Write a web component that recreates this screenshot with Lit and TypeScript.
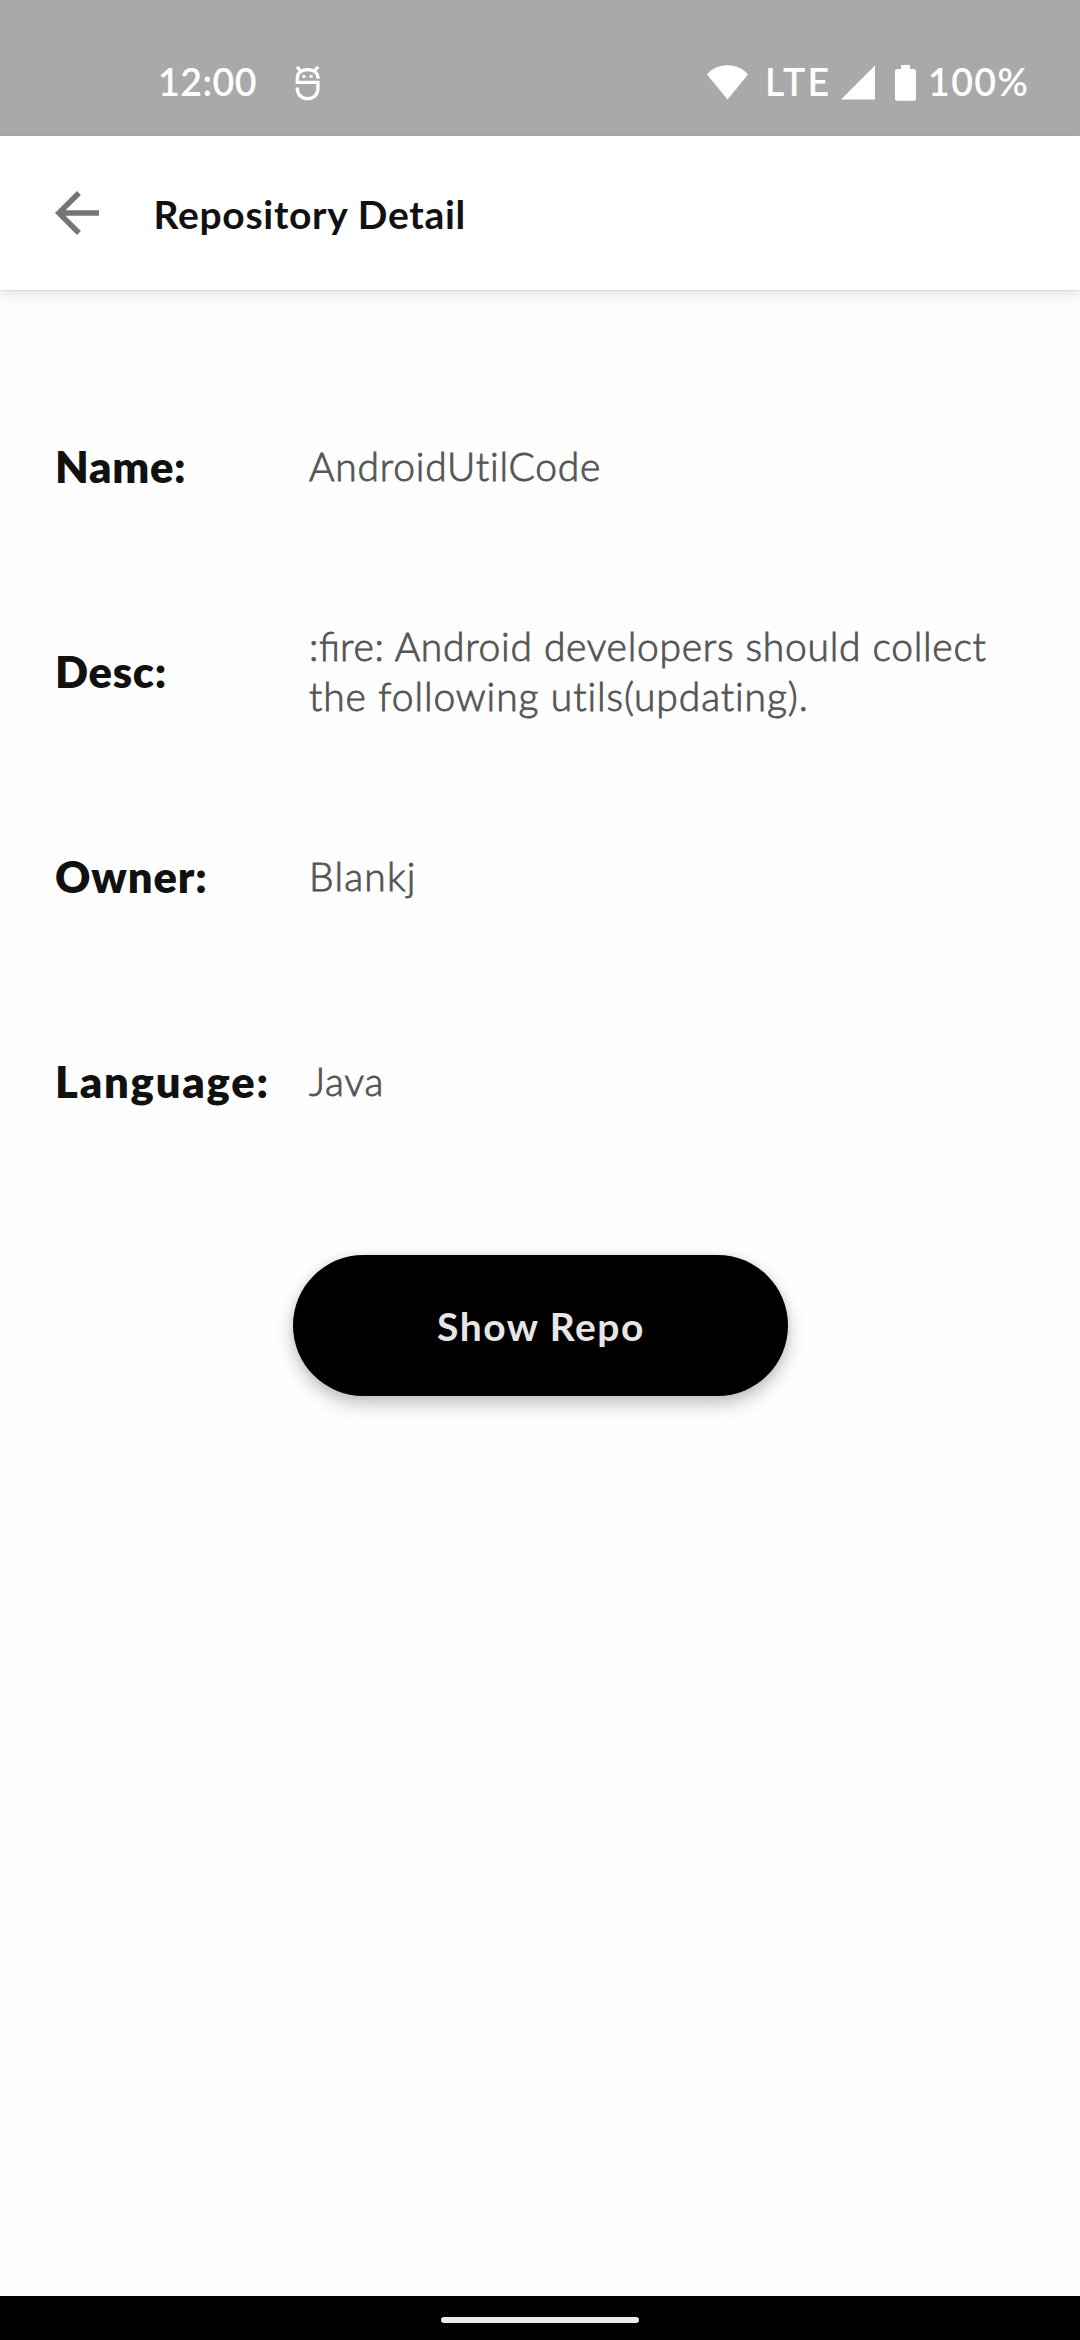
import { LitElement, html, css, TemplateResult } from "lit";
import { customElement } from "lit/decorators.js";

interface Field { key: string; label: string; lines: (string | TemplateResult)[]; }

const FIELDS: Field[] = [
  { key: "name", label: "Name:", lines: ["AndroidUtilCode"] },
  {
    key: "desc",
    label: "Desc:",
    lines: [
      html`:<span class="liga">fi</span>re: Android developers should collect`,
      "the following utils(updating).",
    ],
  },
  { key: "owner", label: "Owner:", lines: ["Blankj"] },
  { key: "language", label: "Language:", lines: ["Java"] },
];

@customElement("status-bar")
export class StatusBar extends LitElement {
  static styles = css`
    :host { display: flex; align-items: center; box-sizing: border-box; height: 136px; padding: 27px 0 0 158px; background: #a9a9a9; color: #fff; font-size: 37.5px; font-weight: 600; white-space: nowrap; }
    svg { display: block; height: 36px; margin-top: 3px; fill: #fff; flex: none; }
    .clock { width: 137px; letter-spacing: 0.5px; }
    .app { width: 26px; fill: none; stroke: #fff; stroke-width: 3.3; }
    .wifi { width: 41px; margin-left: auto; }
    .net { width: 76px; margin-left: 17px; letter-spacing: 2.1px; }
    .signal { width: 34px; }
    .battery { width: 21px; margin-left: 20px; }
    .percent { width: 152px; margin-left: 12px; letter-spacing: 1.4px; }
  `;
  render() {
    return html`
      <span class="clock">12:00</span>
      <svg class="app" viewBox="0 0 26 36">
        <path d="M22.9 13.8V12.8C22.9 7.600 18.300 4.600 12.600 4.600S2.300 7.600 2.300 12.800V17.300H22.900V23.800C22.900 29.800 18.400 33.600 12.600 33.600S2.300 29.800 2.300 23.800V22.600" />
        <path d="M2 1.800l3.800 4.200M23.200 1.800l-3.800 4.200" />
        <g fill="#fff" stroke="none"><circle cx="8.900" cy="11.400" r="1.700" /><circle cx="16.100" cy="11.400" r="1.700" /></g>
      </svg>
      <svg class="wifi" viewBox="0 0 41 36"><path d="M20.500 34.400L0 9.400C5.500 3 12.500 .2 20.500 .2S35.500 3 41 9.400z" /></svg>
      <span class="net">LTE</span>
      <svg class="signal" viewBox="0 0 34 36"><path d="M0 34.600L34 .5v34.100z" /></svg>
      <svg class="battery" viewBox="0 0 21 36"><path d="M6 0h9v4h4a2 2 0 0 1 2 2v27.700a2 2 0 0 1-2 2H2a2 2 0 0 1-2-2V6a2 2 0 0 1 2-2h4z" /></svg>
      <span class="percent">100%</span>
    `;
  }
}

@customElement("app-bar")
export class AppBar extends LitElement {
  static styles = css`
    :host { display: flex; align-items: center; height: 154px; padding-left: 44px; background: #fff; box-shadow: 0 1px 1px rgba(0, 0, 0, 0.07), 0 5px 12px rgba(0, 0, 0, 0.1); }
    svg { display: block; width: 66px; height: 66px; fill: #757575; }
    .title { margin-left: 43.5px; padding-top: 2px; font-size: 39px; font-weight: 700; letter-spacing: 0.7px; color: #111; white-space: nowrap; }
  `;
  render() {
    return html`
      <svg viewBox="0 0 24 24"><path d="M20 11H7.830l5.590-5.590L12 4l-8 8 8 8 1.410-1.410L7.830 13H20v-2z" /></svg>
      <span class="title">Repository Detail</span>
    `;
  }
}

@customElement("app-root")
export class AppRoot extends LitElement {
  static styles = css`
    :host { display: block; font-family: Lato, "Open Sans", sans-serif; }
    .screen { display: flex; flex-direction: column; height: 2340px; background: #fefefe; }
    .content { flex: 1; display: flex; flex-direction: column; padding-top: 73.5px; }
    .field { display: grid; grid-template-columns: 254px 1fr; align-items: center; height: 205px; padding-left: 55px; white-space: nowrap; }
    .label { font-size: 43.5px; font-weight: 800; color: #111; letter-spacing: 0.7px; }
    .owner .label { letter-spacing: 0.9px; }
    .language .label { letter-spacing: 1.8px; }
    .value { font-size: 39px; font-weight: 300; line-height: 50px; color: #555; -webkit-text-stroke: 0.85px #555; letter-spacing: 0.8px; }
    .desc .line { letter-spacing: 0.71px; }
    .desc .line + .line { letter-spacing: 0.9px; }
    .desc .liga { letter-spacing: 0; }
    .owner .value { letter-spacing: 1.2px; }
    .show { align-self: center; margin-top: 71.5px; width: 495px; height: 141px; padding: 0 0 0 2px; border: 0; border-radius: 71px; background: #000; color: #e6e6e6; font: 700 39px Lato, "Open Sans", sans-serif; letter-spacing: 1.5px; box-shadow: 0 8px 18px rgba(0, 0, 0, 0.24), 0 0 8px rgba(0, 0, 0, 0.08); }
    .nav { display: flex; align-items: center; justify-content: center; box-sizing: border-box; height: 44px; padding-top: 4px; background: #000; }
    .handle { width: 198px; height: 6px; border-radius: 3px; background: #ebebeb; }
  `;
  render() {
    return html`
      <div class="screen">
        <status-bar></status-bar>
        <app-bar></app-bar>
        <main class="content">
          ${FIELDS.map((f) => html`
            <div class="field ${f.key}">
              <span class="label">${f.label}</span>
              <div class="value">${f.lines.map((l) => html`<div class="line">${l}</div>`)}</div>
            </div>`)}
          <button class="show">Show Repo</button>
        </main>
        <div class="nav"><div class="handle"></div></div>
      </div>
    `;
  }
}
